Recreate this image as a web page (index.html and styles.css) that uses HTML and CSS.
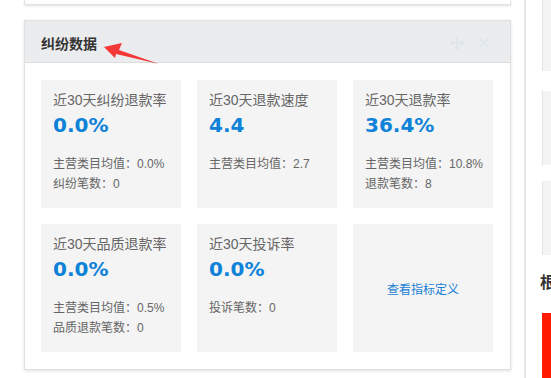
FILE: index.html
```html
<!DOCTYPE html>
<html lang="zh-CN">
<head>
    <meta charset="UTF-8">
    <title>纠纷数据</title>
    <link rel="stylesheet" href="styles.css">
</head>
<body>
    <div class="page">
        <div class="mainCol">
            <div class="topCard"></div>

            <div class="panel">
                <div class="panelHead">
                    <h3>纠纷数据</h3>
                    <div class="tools">
                        <svg width="14" height="14" viewBox="0 0 14 14">
                            <path d="M7 1v12M1 7h12M5 3l2-2 2 2M5 11l2 2 2-2M3 5L1 7l2 2M11 5l2 2-2 2" stroke="#dde5ec" stroke-width="1.6" fill="none"/>
                        </svg>
                        <svg width="12" height="12" viewBox="0 0 12 12">
                            <path d="M2 2l8 8M10 2l-8 8" stroke="#dde5ec" stroke-width="1.6" fill="none"/>
                        </svg>
                    </div>
                    <svg class="arrow" width="140" height="50" viewBox="0 0 140 50">
                        <polygon points="79,26 97,22 94,29 134,43 91,33 90,37" fill="#f43838"/>
                    </svg>
                </div>

                <div class="panelBody">
                    <div class="stat">
                        <div class="statTitle">近30天纠纷退款率</div>
                        <div class="statValue">0.0%</div>
                        <div class="statInfo">主营类目均值：0.0%</div>
                        <div class="statInfo">纠纷笔数：0</div>
                    </div>
                    <div class="stat">
                        <div class="statTitle">近30天退款速度</div>
                        <div class="statValue">4.4</div>
                        <div class="statInfo">主营类目均值：2.7</div>
                    </div>
                    <div class="stat">
                        <div class="statTitle">近30天退款率</div>
                        <div class="statValue">36.4%</div>
                        <div class="statInfo">主营类目均值：10.8%</div>
                        <div class="statInfo">退款笔数：8</div>
                    </div>
                    <div class="stat">
                        <div class="statTitle">近30天品质退款率</div>
                        <div class="statValue">0.0%</div>
                        <div class="statInfo">主营类目均值：0.5%</div>
                        <div class="statInfo">品质退款笔数：0</div>
                    </div>
                    <div class="stat">
                        <div class="statTitle">近30天投诉率</div>
                        <div class="statValue">0.0%</div>
                        <div class="statInfo">投诉笔数：0</div>
                    </div>
                    <div class="stat linkStat">
                        <a href="#">查看指标定义</a>
                    </div>
                </div>
            </div>
        </div>

        <div class="sideCol">
            <div class="sideBox box1"></div>
            <div class="sideBox box2"></div>
            <div class="sideBox box3"></div>
            <div class="sideTitle">根</div>
            <div class="redBlock"></div>
        </div>
    </div>
</body>
</html>
```

FILE: styles.css
```css
* {
    margin: 0;
    padding: 0;
    box-sizing: border-box;
}

body {
    background-color: #fff;
    font-family: "Liberation Sans", "Noto Sans CJK SC", sans-serif;
    color: #666;
    overflow: hidden;
}

.page {
    display: flex;
    height: 378px;
}

.mainCol {
    margin-left: 24px;
    width: 488px;
}

.topCard {
    height: 5px;
    border: 1px solid #e2e2e2;
    border-top: none;
    box-shadow: 0 1px 3px rgba(0, 0, 0, 0.12);
}

.panel {
    position: relative;
    margin-top: 15px;
    border: 1px solid #e0e0e0;
    box-shadow: 0 1px 3px rgba(0, 0, 0, 0.12);
}

.panelHead {
    height: 42px;
    background-color: #ebecee;
    border-bottom: 1px solid #dcdcdc;
    display: flex;
    align-items: center;
    justify-content: space-between;
    padding: 3px 20px 0 16px;
}

.panelHead h3 {
    font-size: 14px;
    font-weight: bold;
    color: #333;
}

.tools {
    display: flex;
    align-items: center;
    gap: 14px;
}

.arrow {
    position: absolute;
    left: 0;
    top: 0;
}

.panelBody {
    display: grid;
    grid-template-columns: repeat(3, 140px);
    gap: 16px;
    padding: 17px 17px 17px 16px;
}

.stat {
    height: 128px;
    background-color: #f4f4f4;
    padding: 10px 12px;
}

.statTitle {
    font-size: 14px;
    line-height: 20px;
    color: #666;
    white-space: nowrap;
}

.statValue {
    font-family: "DejaVu Sans", sans-serif;
    font-size: 20px;
    font-weight: bold;
    line-height: 30px;
    color: #0d82d8;
    margin-bottom: 14px;
}

.statInfo {
    font-size: 12px;
    line-height: 20px;
    color: #666;
    white-space: nowrap;
}

.linkStat {
    display: flex;
    align-items: center;
    justify-content: center;
}

.linkStat a {
    font-size: 12px;
    color: #1a7fd4;
    text-decoration: none;
}

.sideCol {
    margin-left: 13px;
    flex: 1;
    border-left: 2px solid #e6e6e6;
    padding-left: 16px;
}

.sideBox {
    background-color: #f4f4f4;
    border-left: 1px solid #e6e6e6;
}

.box1 {
    height: 71px;
}

.box2 {
    height: 74px;
    margin-top: 20px;
}

.box3 {
    height: 74px;
    margin-top: 16px;
}

.sideTitle {
    margin-top: 19px;
    font-size: 16px;
    font-weight: bold;
    color: #333;
    line-height: 18px;
    margin-left: -2px;
}

.redBlock {
    margin-top: 21px;
    height: 70px;
    background-color: #ff1a00;
}
```
